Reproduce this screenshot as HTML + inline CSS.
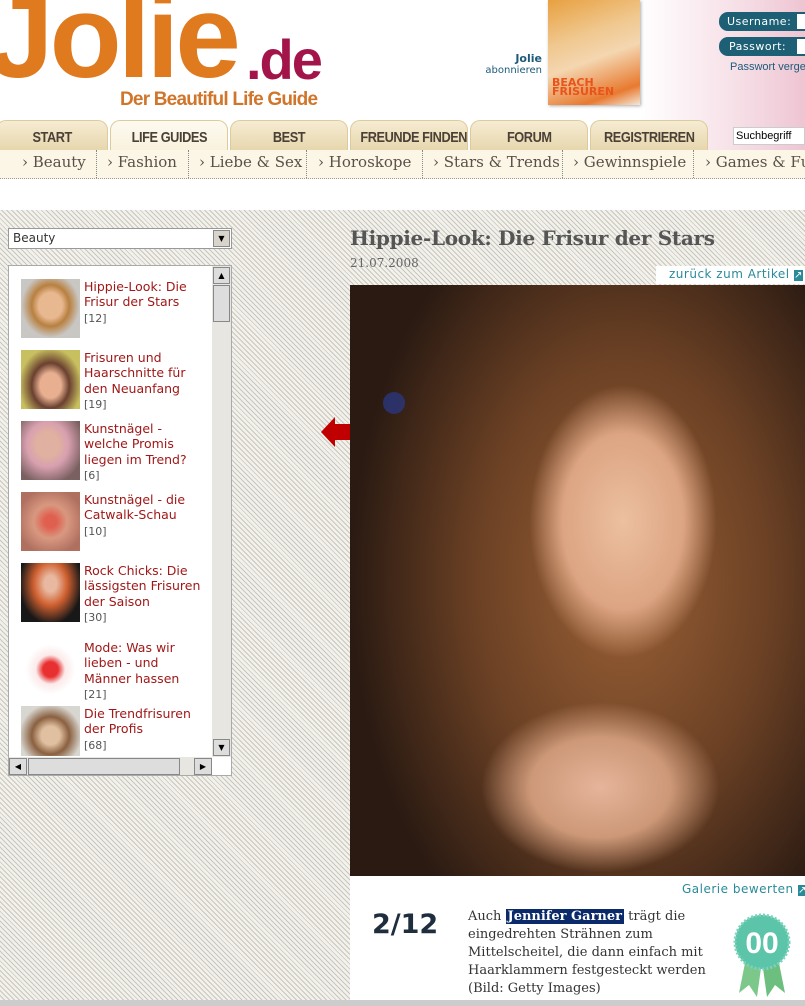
<!DOCTYPE html>
<html><head><meta charset="utf-8"><style>
*{margin:0;padding:0;box-sizing:border-box}
body{width:805px;height:1006px;overflow:hidden;position:relative;background:#fff;font-family:"DejaVu Sans",Verdana,sans-serif}
.abs{position:absolute}
.stripe{background:repeating-linear-gradient(45deg,#c9c6bd 0 1px,#f3f1eb 1px 3.5px)}
.tab{position:absolute;top:120px;height:31px;background:linear-gradient(#f6ecd3,#e6d6ac);border:1px solid #dccb9c;border-bottom:none;border-radius:10px 10px 0 0;font-family:"Liberation Sans Narrow","Liberation Sans",sans-serif;font-weight:bold;font-size:15px;color:#4a4035;text-align:center;padding-top:8px;white-space:nowrap;letter-spacing:-.5px}
.tab span{display:inline-block;transform:scaleX(.85)}
.sub{position:absolute;top:150px;height:28px;font-family:"DejaVu Serif",serif;font-size:15px;color:#5a5048;padding-top:3px;white-space:nowrap}
.sep{position:absolute;top:150px;height:28px;border-left:1px dotted #888}
.item{position:absolute;left:21px;width:190px}
.th{position:absolute;left:0;top:0;width:59px;height:59px}
.it{position:absolute;left:63px;top:0;font-size:12.5px;line-height:15.3px;color:#a01818;width:117px}
.it span{color:#555;font-size:11px}
</style></head><body>
<div class="abs" style="left:640px;top:0;width:165px;height:150px;background:linear-gradient(90deg,#fff 0%,#f6dfe6 60%,#eec5d2 100%)"></div>
<div class="abs" style="left:-12px;top:-22px;font-family:'Liberation Sans',sans-serif;font-weight:bold;font-size:118px;color:#e07a1e;letter-spacing:-4px;line-height:1">Jolie</div>
<div class="abs" style="left:246px;top:32px;font-family:'Liberation Sans',sans-serif;font-weight:bold;font-size:56px;color:#a3154a;letter-spacing:-2px;line-height:1">.de</div>
<div class="abs" style="left:120px;top:89px;font-family:'Liberation Sans',sans-serif;font-weight:bold;font-size:19px;color:#d0752a;white-space:nowrap;letter-spacing:-.8px">Der Beautiful Life Guide</div>
<div class="abs" style="left:500px;top:52px;font-size:11px;font-weight:bold;color:#1d5a7a;text-align:right;width:42px">Jolie</div>
<div class="abs" style="left:470px;top:65px;font-size:10px;color:#1d5a7a;text-align:right;width:72px">abonnieren</div>
<div class="abs" style="left:548px;top:0;width:92px;height:105px;background:linear-gradient(160deg,#e8a040 0%,#f0c890 35%,#f4d6b0 55%,#e87a30 85%,#f3e8d8 100%);box-shadow:1px 1px 3px #aaa"></div>
<div class="abs" style="left:552px;top:78px;font-size:11px;font-weight:bold;color:#e8541a;line-height:9px">BEACH<br>FRISUREN</div>
<div class="abs" style="left:719px;top:12px;width:86px;height:19px;background:#1d6076;border-radius:9px 0 0 9px;color:#fff;font-size:11px;padding:3px 0 0 8px;letter-spacing:.5px">Username:</div>
<div class="abs" style="left:719px;top:37px;width:86px;height:19px;background:#1d6076;border-radius:9px 0 0 9px;color:#fff;font-size:11px;padding:3px 0 0 10px;letter-spacing:.5px">Passwort:</div>
<div class="abs" style="left:797px;top:14px;width:8px;height:15px;background:#fff"></div>
<div class="abs" style="left:797px;top:39px;width:8px;height:15px;background:#fff"></div>
<div class="abs" style="left:730px;top:61px;font-family:'Liberation Sans',sans-serif;font-size:11px;color:#1d5a7a;white-space:nowrap">Passwort vergessen</div>
<div class="tab" style="left:-4px;width:112px;"><span>START</span></div>
<div class="tab" style="left:110px;width:118px;background:linear-gradient(#fdfaf0,#f8f1dc)"><span>LIFE GUIDES</span></div>
<div class="tab" style="left:230px;width:118px"><span>BEST</span></div>
<div class="tab" style="left:350px;width:118px"><span>FREUNDE FINDEN</span></div>
<div class="tab" style="left:470px;width:118px"><span>FORUM</span></div>
<div class="tab" style="left:590px;width:118px"><span>REGISTRIEREN</span></div>
<div class="abs" style="left:733px;top:127px;width:72px;height:18px;background:#fff;border:1px solid #ccc;font-family:'Liberation Sans',sans-serif;font-size:11px;padding:2px 0 0 2px">Suchbegriff</div>
<div class="abs" style="left:0;top:150px;width:805px;height:29px;background:#fbf6e6;border-bottom:1px dotted #999"></div>
<div class="sub" style="left:22px">› Beauty</div>
<div class="sep" style="left:96px"></div>
<div class="sub" style="left:107px">› Fashion</div>
<div class="sep" style="left:188px"></div>
<div class="sub" style="left:199px">› Liebe &amp; Sex</div>
<div class="sep" style="left:306px"></div>
<div class="sub" style="left:318px">› Horoskope</div>
<div class="sep" style="left:422px"></div>
<div class="sub" style="left:433px">› Stars &amp; Trends</div>
<div class="sep" style="left:562px"></div>
<div class="sub" style="left:573px">› Gewinnspiele</div>
<div class="sep" style="left:693px"></div>
<div class="sub" style="left:705px">› Games &amp; Fun</div>
<div class="abs stripe" style="left:0;top:210px;width:805px;height:796px"></div>
<div class="abs" style="left:8px;top:228px;width:224px;height:21px;background:#fff;border:1px solid #999;font-size:12px;padding:2px 4px;color:#333">Beauty</div>
<div class="abs" style="left:213px;top:230px;width:17px;height:17px;background:#d8d4cc;border:1px solid #888;font-size:8px;text-align:center;line-height:16px">▼</div>
<div class="abs" style="left:8px;top:265px;width:224px;height:511px;background:#fff;border:1px solid #aaa"></div>
<div class="abs" style="left:212px;top:266px;width:19px;height:491px;background:#e8e6e0"></div>
<div class="abs" style="left:213px;top:267px;width:17px;height:17px;background:#ddd;border:1px solid #888;font-size:8px;text-align:center;line-height:15px">▲</div>
<div class="abs" style="left:213px;top:285px;width:17px;height:37px;background:#ddd;border:1px solid #888"></div>
<div class="abs" style="left:213px;top:739px;width:17px;height:17px;background:#ddd;border:1px solid #888;font-size:8px;text-align:center;line-height:15px">▼</div>
<div class="abs" style="left:9px;top:757px;width:203px;height:18px;background:#e8e6e0"></div>
<div class="abs" style="left:9px;top:758px;width:18px;height:17px;background:#ddd;border:1px solid #888;font-size:8px;text-align:center;line-height:15px">◀</div>
<div class="abs" style="left:28px;top:758px;width:152px;height:17px;background:#ddd;border:1px solid #888"></div>
<div class="abs" style="left:194px;top:758px;width:18px;height:17px;background:#ddd;border:1px solid #888;font-size:8px;text-align:center;line-height:15px">▶</div>

<div class="item" style="top:279px"><div class="th" style="background:radial-gradient(ellipse at 50% 45%,#e8b890 0 28%,#b88040 45%,#c9c7c4 70%)"></div><div class="it">Hippie-Look: Die Frisur der Stars<br><span>[12]</span></div></div>
<div class="item" style="top:350px"><div class="th" style="background:radial-gradient(ellipse at 50% 60%,#e8b090 0 25%,#6a4030 45%,#c8c060 75%)"></div><div class="it">Frisuren und Haarschnitte für den Neuanfang<br><span>[19]</span></div></div>
<div class="item" style="top:421px"><div class="th" style="background:radial-gradient(ellipse at 45% 40%,#e0b0a0 0 25%,#d8a0b0 45%,#7a6060 80%)"></div><div class="it">Kunstnägel - welche Promis liegen im Trend?<br><span>[6]</span></div></div>
<div class="item" style="top:492px"><div class="th" style="background:radial-gradient(ellipse at 50% 50%,#e06050 0 15%,#d89880 40%,#b07060 80%)"></div><div class="it">Kunstnägel - die Catwalk-Schau<br><span>[10]</span></div></div>
<div class="item" style="top:563px"><div class="th" style="background:radial-gradient(ellipse at 50% 35%,#e8b8a0 0 15%,#d06030 40%,#181818 75%)"></div><div class="it">Rock Chicks: Die lässigsten Frisuren der Saison<br><span>[30]</span></div></div>
<div class="item" style="top:640px"><div class="th" style="background:radial-gradient(ellipse at 50% 50%,#e83030 0 18%,#fbeaea 35%,#fff 60%)"></div><div class="it">Mode: Was wir lieben - und Männer hassen<br><span>[21]</span></div></div>
<div class="item" style="top:706px;height:50px;overflow:hidden"><div class="th" style="background:radial-gradient(ellipse at 50% 50%,#e0c0a0 0 22%,#8a6040 45%,#d8d6d0 75%)"></div><div class="it">Die Trendfrisuren der Profis<br><span>[68]</span></div></div>

<div class="abs" style="left:350px;top:226px;font-family:'DejaVu Serif',serif;font-weight:bold;font-size:20px;color:#555;white-space:nowrap;letter-spacing:-.3px">Hippie-Look: Die Frisur der Stars</div>
<div class="abs" style="left:350px;top:256px;font-family:'DejaVu Serif',serif;font-size:12px;color:#666">21.07.2008</div>
<div class="abs" style="left:656px;top:266px;width:149px;height:18px;background:#fff"></div>
<div class="abs" style="left:669px;top:267px;font-size:12px;color:#2a8a9a;white-space:nowrap;letter-spacing:.5px">zurück zum Artikel <span style="background:#2a8a9a;color:#fff;font-size:10px">↗</span></div>
<svg class="abs" style="left:321px;top:415px" width="30" height="34"><polygon points="0,17 14,2 14,9 30,9 30,25 14,25 14,32" fill="#c00000"/></svg>
<div class="abs" style="left:350px;top:285px;width:455px;height:591px;background:
radial-gradient(ellipse 110px 160px at 60% 40%,#ecc0a0 0%,#dca482 55%,rgba(150,90,50,0) 85%),
radial-gradient(ellipse 140px 100px at 55% 85%,#e6b49a 0%,#cc9878 50%,rgba(0,0,0,0) 85%),
radial-gradient(ellipse 60% 70% at 60% 50%,#9a6036 0%,#6a4024 55%,#2a1a12 100%);"></div>
<div class="abs" style="left:383px;top:392px;width:22px;height:22px;border-radius:50%;background:#2a3a8a;opacity:.7"></div>
<div class="abs" style="left:350px;top:876px;width:455px;height:124px;background:#fff"></div>
<div class="abs" style="left:682px;top:882px;font-size:12px;color:#2a8a9a;white-space:nowrap;letter-spacing:.5px">Galerie bewerten <span style="background:#2a8a9a;color:#fff;font-size:10px">↗</span></div>
<div class="abs" style="left:372px;top:909px;font-family:'DejaVu Sans',sans-serif;font-weight:bold;font-size:27px;color:#1e2e3e">2/12</div>
<div class="abs" style="left:468px;top:908px;width:260px;font-family:'DejaVu Serif',serif;font-size:13px;line-height:18px;color:#333">Auch <b style="background:#0a2a6a;color:#fff;padding:0 2px">Jennifer Garner</b> trägt die eingedrehten Strähnen zum Mittelscheitel, die dann einfach mit Haarklammern festgesteckt werden (Bild: Getty Images)</div>
<svg class="abs" style="left:733px;top:913px" width="58" height="86"><polygon points="14,40 6,80 16,72 24,84 29,48" fill="#7cc88a"/><polygon points="44,40 52,80 42,72 34,84 29,48" fill="#6cbf7e"/><circle cx="29" cy="29" r="27" fill="#5cc4a8" stroke="#7ad4bc" stroke-width="3" stroke-dasharray="2 2"/><text x="29" y="40" text-anchor="middle" font-family="Liberation Sans" font-weight="bold" font-size="30" fill="#fff">00</text></svg>
<div class="abs" style="left:0;top:1000px;width:805px;height:6px;background:#ccc"></div>
</body></html>
